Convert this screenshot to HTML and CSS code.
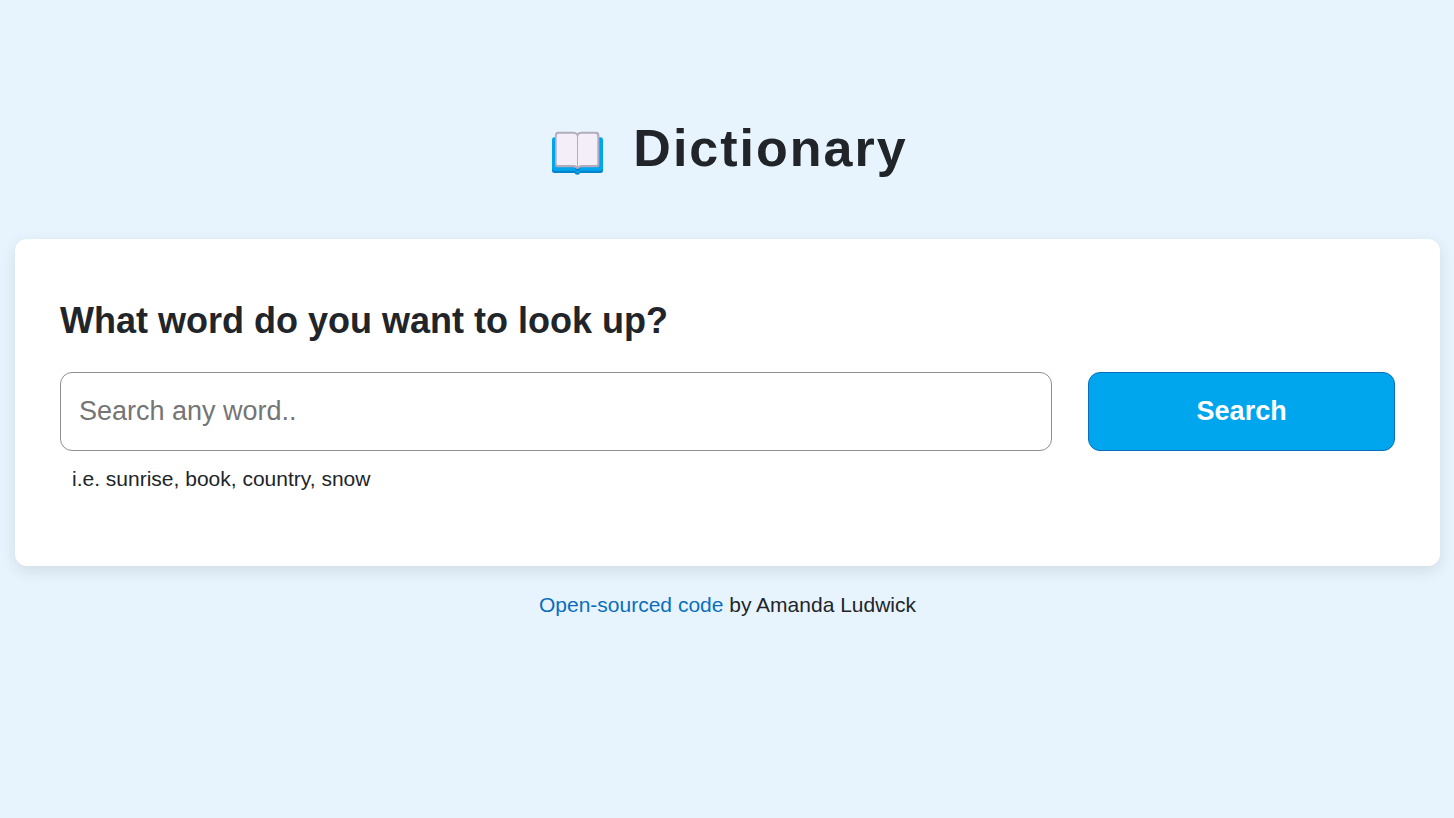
FILE: index.html
```html
<!DOCTYPE html>
<html lang="en">
<head>
<meta charset="utf-8">
<meta name="viewport" content="width=device-width, initial-scale=1">
<title>Dictionary</title>
<link rel="stylesheet" href="styles.css">
</head>
<body>
<div class="app">
  <header class="header">
    <svg class="logo" viewBox="0 0 222 132" aria-hidden="true">
      <path fill="#0084ce" d="M27 110h153v9q0 7-7 7h-62q-1 5-8 5t-8-5H34q-7 0-7-7z"/>
      <path fill="#00a6ed" d="M27 26q0-7 7-7h139q7 0 7 7v86q0 7-7 7h-62l-3 6h-9l-3-6H34q-7 0-7-7z"/>
      <path fill="#0084ce" d="M96 110h15v6q-2 4-7 4t-8-4z"/>
      <path fill="#b4acbc" d="M36 12q0-10 10-10h46q8 0 11 5 4-5 11-5h45q10 0 10 10v90q0 7-7 7h-47q-4 0-6 3-6 4-11 0-3-3-7-3H43q-7 0-7-7z"/>
      <path fill="#f3eef8" d="M41 15q0-7 7-7h43q11 0 11 10v88q-4-4-12-4H45q-4 0-4-4zM105 18q0-10 12-10h39q7 0 7 7v83q0 4-4 4h-42q-8 0-12 4z"/>
    </svg>
    <h1 class="title">Dictionary</h1>
  </header>
  <main class="card">
    <form class="search">
      <label class="question" for="word">What word do you want to look up?</label>
      <div class="fields">
        <input class="field" id="word" type="search" placeholder="Search any word..">
        <button class="submit" type="submit">Search</button>
      </div>
    </form>
    <p class="hint">i.e. sunrise, book, country, snow</p>
  </main>
  <footer class="footer"><a class="link" href="#source">Open-sourced code</a> by Amanda Ludwick</footer>
</div>
</body>
</html>
```

FILE: styles.css
```css
* {
  box-sizing: border-box;
}

body {
  margin: 0;
  background: #e7f4fe;
  color: #212529;
  font-family: "Liberation Sans", Arial, sans-serif;
  font-size: 21px;
  line-height: 32px;
}

.app {
  padding: 112px 14px 32px 15px;
}

.header {
  display: flex;
  justify-content: center;
  align-items: center;
  gap: 16px;
  margin-bottom: 55px;
}

.logo {
  width: 74px;
  height: 44px;
  margin-top: 10px;
}

.title {
  margin: 0;
  padding-right: 4px;
  font-size: 52px;
  line-height: 72px;
  letter-spacing: 2px;
}

.card {
  padding: 60px 45px;
  background: #fff;
  border-radius: 12px;
  box-shadow: 0 5px 15px rgba(0, 0, 0, 0.1);
}

.question {
  display: block;
  margin-bottom: 30px;
  font-size: 36px;
  font-weight: 700;
  line-height: 43px;
}

.fields {
  display: grid;
  grid-template-columns: repeat(4, 1fr);
  gap: 36px;
}

.field,
.submit {
  height: 79px;
  padding: 0 18px;
  border: 1px solid #8f8f8f;
  border-radius: 12px;
  font: inherit;
  font-size: 27px;
}

.field {
  grid-column: span 3;
  min-width: 0;
  background: #fff;
  color: inherit;
  appearance: none;
}

.field::placeholder {
  color: #757575;
}

.submit {
  padding-bottom: 2px;
  border-color: #0a6ebd;
  background: #00a6ed;
  color: #fff;
  font-weight: 700;
}

.hint {
  margin: 12px 0 11px;
  padding-left: 12px;
}

.footer {
  margin-top: 23px;
  text-align: center;
}

.link {
  color: #0a6ebd;
  text-decoration: none;
}
```
